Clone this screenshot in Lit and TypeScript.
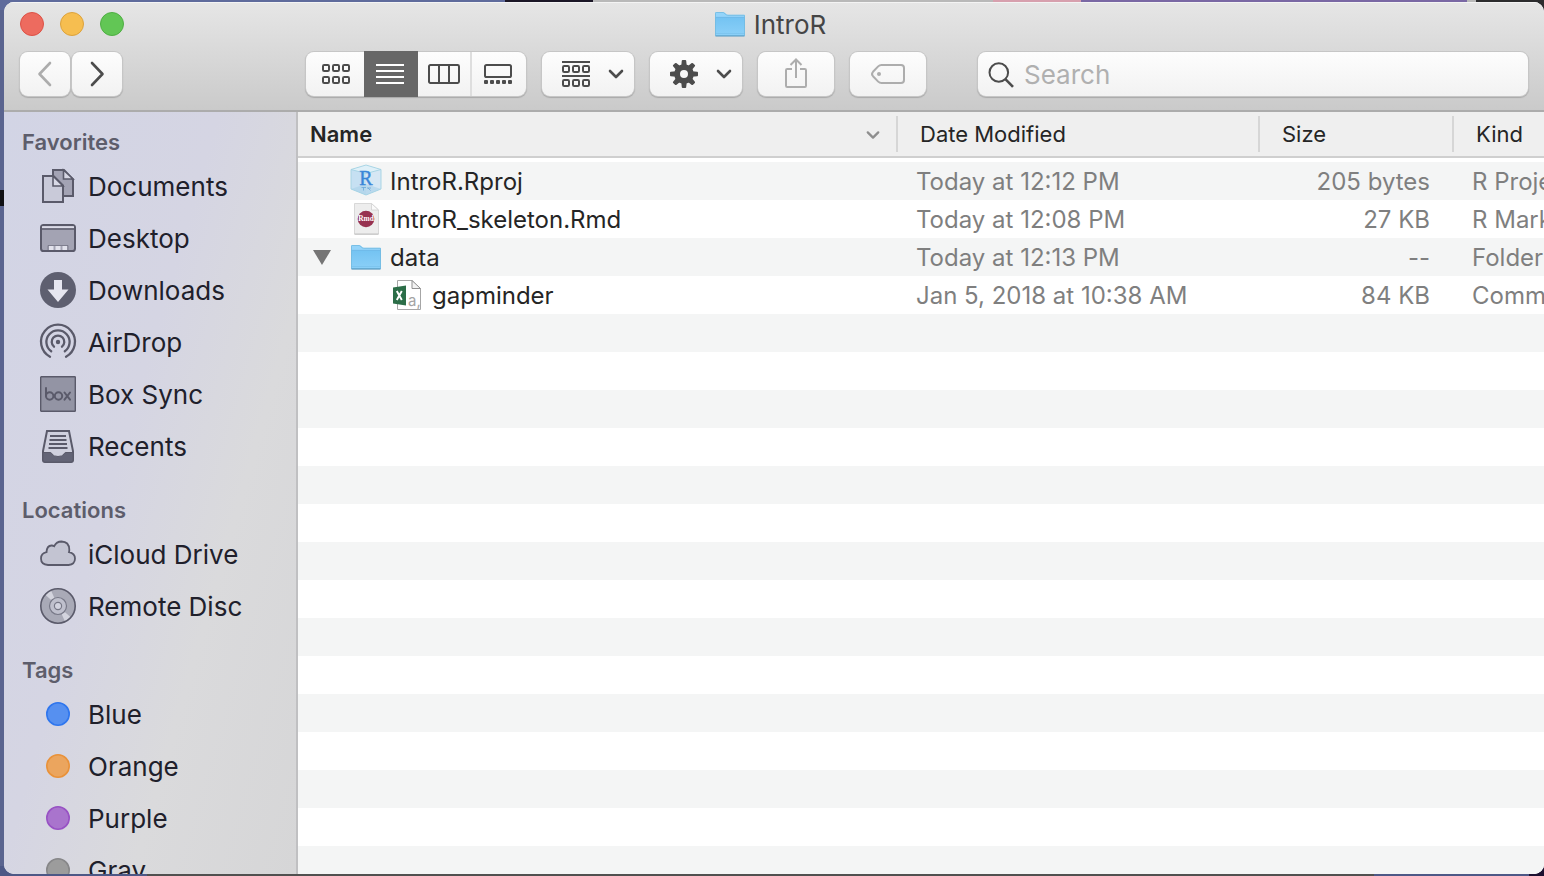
import { LitElement, html, css, svg } from "lit";
import { customElement, property, state } from "lit/decorators.js";
import { classMap } from "lit/directives/class-map.js";

const FONT = css`
  :host {
    box-sizing: border-box;
    font-family: Inter, "Liberation Sans", sans-serif;
    -webkit-font-smoothing: antialiased;
  }
  *, *::before, *::after { box-sizing: border-box; }
  button { font: inherit; color: inherit; cursor: default; }
  svg { display: block; flex: none; overflow: visible; }
`;

/* ---------- shared drawings ---------- */

const folderIcon = html`
  <svg width="32" height="28" viewBox="0 1 32 28" aria-hidden="true">
    <defs>
      <linearGradient id="folder-front" x1="0" y1="0" x2="0" y2="1">
        <stop offset="0" stop-color="#74c3f2"></stop>
        <stop offset="1" stop-color="#8bd0f8"></stop>
      </linearGradient>
    </defs>
    <path d="M1 26V3.2Q1 2 2.2 2H9.3Q10.2 2 10.9 2.7L12.6 4.2Q13.2 4.8 14.2 4.8H30Q31 4.8 31 5.8V26Z" fill="#94d4fa"></path>
    <path d="M1 7.5H31V25Q31 26 30 26H2Q1 26 1 25Z" fill="url(#folder-front)"></path>
    <path d="M1.5 7.4H30.5" stroke="#68b5e4" stroke-width="0.8"></path>
    <path d="M1.5 23.5H30.5" stroke="#7ac3ec" stroke-width="0.8"></path>
    <path d="M1.5 25.6V3.2Q1.5 2.5 2.2 2.5H9.3L12.4 4.9L14 5.3H30.5V25.6Z" fill="none" stroke="#72badf" stroke-width="0.8"></path>
    <path d="M1.5 26H30.5" stroke="#5a9cc4" stroke-width="1.2"></path>
  </svg>`;

const chevronDown = html`
  <svg width="16" height="10" viewBox="0 0 16 10" fill="none" stroke="currentColor" stroke-width="2.6"
    stroke-linecap="round" stroke-linejoin="round" aria-hidden="true">
    <path d="M2 2L8 8L14 2"></path>
  </svg>`;

const roundedSquares = (y: number) =>
  [1, 11, 21].map((x) => svg`<rect x=${x} y=${y} width="6" height="6" rx="1.2"></rect>`);

const toolIcons = {
  back: html`<svg width="16" height="26" viewBox="0 0 16 26" fill="none" stroke="#acacac" stroke-width="2.6" stroke-linecap="round" stroke-linejoin="round"><path d="M13 2L2.5 13L13 24"></path></svg>`,
  forward: html`<svg width="16" height="26" viewBox="0 0 16 26" fill="none" stroke="#4c4c4c" stroke-width="2.6" stroke-linecap="round" stroke-linejoin="round"><path d="M3 2L13.5 13L3 24"></path></svg>`,
  grid: html`<svg width="28" height="20" viewBox="0 0 28 20" fill="none" stroke="#4c4c4c" stroke-width="2">${roundedSquares(1)}${roundedSquares(13)}</svg>`,
  list: html`<svg width="28" height="20" viewBox="0 0 28 20" fill="#fff"><path d="M0 0H28V2H0ZM0 6H28V8H0ZM0 12H28V14H0ZM0 18H28V20H0Z"></path></svg>`,
  columns: html`<svg width="32" height="20" viewBox="0 0 32 20" fill="none" stroke="#4c4c4c" stroke-width="2"><rect x="1" y="1" width="30" height="18" rx="1.4"></rect><path d="M11 1V19M21 1V19"></path></svg>`,
  gallery: html`<svg width="28" height="20" viewBox="0 0 28 20" fill="none" stroke="#4c4c4c" stroke-width="2"><rect x="1" y="1" width="26" height="12" rx="1.6"></rect><g fill="#4c4c4c" stroke="none">${[0, 6, 12, 18, 24].map((x) => svg`<rect x=${x} y="16" width="4" height="4" rx="1"></rect>`)}</g></svg>`,
  arrange: html`<svg width="28" height="26" viewBox="0 0 28 26" fill="none" stroke="#4c4c4c" stroke-width="2"><path d="M0 1H28M0 15H28"></path>${roundedSquares(5)}${roundedSquares(19)}</svg>`,
  gear: html`<svg width="28" height="28" viewBox="-14 -14 28 28" fill="#4c4c4c">
    ${[0, 45, 90, 135, 180, 225, 270, 315].map((a) => svg`<path d="M-2.8 -8L-2.2 -13.2Q-2.1 -14 -1.3 -14H1.3Q2.1 -14 2.2 -13.2L2.8 -8Z" transform="rotate(${a})"></path>`)}
    <path fill-rule="evenodd" d="M0 -9.8A9.8 9.8 0 1 1 0 9.8A9.8 9.8 0 1 1 0 -9.8ZM0 -4A4 4 0 1 0 0 4A4 4 0 1 0 0 -4Z"></path></svg>`,
  share: html`<svg width="22" height="30" viewBox="0 1 22 30" fill="none" stroke="#adadad" stroke-width="2"><path d="M7 11H2.2Q1 11 1 12.2V27.8Q1 29 2.2 29H19.8Q21 29 21 27.8V12.2Q21 11 19.8 11H15M11 20V1.6M5.5 7L11 1.5L16.5 7"></path></svg>`,
  tag: html`<svg width="34" height="20" viewBox="0 0 34 20" fill="none" stroke="#adadad" stroke-width="2"><path d="M10.5 1H30Q33 1 33 4V16Q33 19 30 19H10.5Q8.6 19 7.2 17.6L2 12.2Q0 10 2 7.8L7.2 2.4Q8.6 1 10.5 1Z"></path><circle cx="8" cy="10" r="2" fill="#adadad" stroke="none"></circle></svg>`,
  search: html`<svg width="26" height="26" viewBox="0 -1 26 26" fill="none" stroke="#4c4c4c"><circle cx="10.8" cy="10.5" r="9.3" stroke-width="2"></circle><path d="M17.4 17.2L25 24.8" stroke-width="2.6"></path></svg>`,
};

/* ---------- sidebar drawings, 36 x 36 ---------- */

const frame = (body: unknown) =>
  html`<svg width="36" height="36" viewBox="0 0 36 36" fill="none" stroke="#5a5a6a" stroke-width="2" aria-hidden="true">${body}</svg>`;

const placeIcons: Record<string, unknown> = {
  documents: frame(svg`
    <path d="M13 2H24L33 11.5V28H13Z" fill="#a3a3b4"></path>
    <path d="M23.5 2V11H33Z" fill="#d5d5e2" stroke-width="1.6"></path>
    <path d="M3 8H13.5L23 17.5V34H3Z" fill="#c9cad9"></path>
    <path d="M13 8V18H23Z" fill="#d8d9e6" stroke-width="1.6"></path>`),
  desktop: frame(svg`
    <rect x="1" y="5" width="34" height="26" rx="2.6" fill="#a3a3b3"></rect>
    <path d="M2 6.2H34V8.2H2Z" fill="#dcdce8" stroke="none"></path>
    <path d="M1 9H35" stroke-width="1.6"></path>
    <path d="M9 26H13.5V30H9ZM15.5 26H20.5V30H15.5ZM22.5 26H27V30H22.5Z" fill="#e2e2ec" stroke="none"></path>
    <path d="M8 30V25.5H28V30" stroke-width="1" opacity="0.5"></path>`),
  downloads: frame(svg`
    <circle cx="18" cy="18" r="18" fill="#5e5f70" stroke="none"></circle>
    <path d="M14 8H22V17.5H28.5L18 30L7.5 17.5H14Z" fill="#e6e6f0" stroke="none"></path>`),
  airdrop: frame(svg`
    <g stroke-width="2.3" stroke-linecap="round">
      <path d="M10 32.7A17 17 0 1 1 26 32.7"></path>
      <path d="M11.2 27.3A11.6 11.6 0 1 1 24.8 27.3"></path>
      <path d="M14 22.7A6.3 6.3 0 1 1 22 22.7"></path>
    </g>
    <circle cx="18" cy="18" r="2.2" fill="#5a5a6a" stroke="none"></circle>`),
  box: frame(svg`
    <rect x="0.7" y="0.7" width="34.6" height="34.6" rx="0.6" fill="#9394a4" stroke-width="1.4"></rect>
    <g stroke-width="2" stroke-linecap="round">
      <path d="M6 12V20"></path><circle cx="9.7" cy="20" r="3.7"></circle><circle cx="18.5" cy="20" r="3.7"></circle>
      <path d="M24.5 16.5L30 23.7M30 16.5L24.5 23.7"></path>
    </g>`),
  recents: frame(svg`
    <path d="M7 3H29L33 23V32Q33 34 31 34H5Q3 34 3 32V23Z" fill="#cfd0de"></path>
    <path d="M3 24.5H10Q11.5 24.5 12 26Q13.5 28.5 18 28.5Q22.5 28.5 24 26Q24.5 24.5 26 24.5H33V32Q33 34 31 34H5Q3 34 3 32Z" fill="#636476" stroke-width="1"></path>
    <path d="M10 8H26M9.5 12H26.5M9 16H27M8.5 20H27.5" stroke-width="1.8"></path>`),
  cloud: frame(svg`
    <path d="M8 29Q1 28.5 1 22.5Q1 17.3 6.5 16.2Q6.8 9.8 11.5 9.5Q13 9.4 14.2 10.2Q16.5 5.5 21.5 5.5Q29 5.7 29.3 13.5Q29.4 15 29 16.2Q35 17.5 35 22.6Q35 28.5 28.5 29Z" fill="#c3c4d2" stroke-width="1.8"></path>`),
  disc: frame(svg`
    <circle cx="18" cy="18" r="17.2" fill="#a9aab7" stroke="none"></circle>
    <path d="M18 18L5 6.5A17 17 0 0 1 11 2.5ZM18 18L31 29.5A17 17 0 0 1 25 33.5Z" fill="#d3d4de" stroke="none"></path>
    <circle cx="18" cy="18" r="17.2" stroke-width="1.6"></circle>
    <circle cx="18" cy="18" r="8.5" fill="#bfc0cd" stroke-width="1.2" stroke="#777887"></circle>
    <circle cx="18" cy="18" r="3.6" fill="#d2d3df" stroke-width="1.2" stroke="#777887"></circle>`),
};

const dot = (fill: string, edge: string) =>
  frame(svg`<circle cx="18" cy="18" r="11.2" fill=${fill} stroke=${edge} stroke-width="1.6"></circle>`);

interface Place { label: string; icon: unknown; }
interface Section { title: string; places: Place[]; }

const SECTIONS: Section[] = [
  {
    title: "Favorites",
    places: [
      { label: "Documents", icon: placeIcons.documents },
      { label: "Desktop", icon: placeIcons.desktop },
      { label: "Downloads", icon: placeIcons.downloads },
      { label: "AirDrop", icon: placeIcons.airdrop },
      { label: "Box Sync", icon: placeIcons.box },
      { label: "Recents", icon: placeIcons.recents },
    ],
  },
  {
    title: "Locations",
    places: [
      { label: "iCloud Drive", icon: placeIcons.cloud },
      { label: "Remote Disc", icon: placeIcons.disc },
    ],
  },
  {
    title: "Tags",
    places: [
      { label: "Blue", icon: dot("#5690f0", "#2f76ee") },
      { label: "Orange", icon: dot("#eba55e", "#e9923a") },
      { label: "Purple", icon: dot("#a974cd", "#9852c4") },
      { label: "Gray", icon: dot("#9c9c9c", "#878789") },
    ],
  },
];

@customElement("finder-sidebar")
export class FinderSidebar extends LitElement {
  static styles = [
    FONT,
    css`
      :host {
        display: block;
        overflow: hidden;
        padding-top: 11px;
        border-right: 2px solid #c0c0c2;
        background: linear-gradient(106deg, #d2d4e5 0%, #d5d5e3 42%, #dadadc 68%, #d6d6d7 100%);
      }
      .section { margin-bottom: 18px; }
      .title {
        margin: 0;
        padding-left: 18px;
        font-size: 22px;
        line-height: 38px;
        font-weight: 600;
        color: #5d5d6b;
      }
      .places { margin: 0; padding: 0; list-style: none; }
      .place {
        display: flex;
        align-items: center;
        gap: 12px;
        height: 52px;
        padding: 0 0 2px 36px;
        font-size: 26px;
        color: #20202b;
        text-decoration: none;
        white-space: nowrap;
      }
    `,
  ];

  render() {
    return html`<nav aria-label="Sidebar">
      ${SECTIONS.map(
        (s) => html`<section class="section">
          <h2 class="title">${s.title}</h2>
          <ul class="places">
            ${s.places.map((p) => html`<li><a class="place" href="#">${p.icon}<span>${p.label}</span></a></li>`)}
          </ul>
        </section>`
      )}
    </nav>`;
  }
}

@customElement("finder-toolbar")
export class FinderToolbar extends LitElement {
  @property() heading = "";
  @state() private view = "List";

  static styles = [
    FONT,
    css`
      :host {
        display: block;
        padding-bottom: 14px;
        border-bottom: 2px solid #acacac;
        background: linear-gradient(#e6e6e6, #cacaca);
        box-shadow: inset 0 1px #f4f4f4;
      }
      .titlebar {
        display: grid;
        grid-template-columns: 1fr auto 1fr;
        align-items: center;
        height: 44px;
        margin-bottom: 6px;
        padding: 0 24px 0 16px;
      }
      .lights { display: flex; gap: 16px; }
      .light { width: 24px; height: 24px; padding: 0; border: 1px solid; border-radius: 50%; }
      .close { background: #ed6b5f; border-color: #dc5146; }
      .minimize { background: #f6be50; border-color: #dca23c; }
      .zoom { background: #62c655; border-color: #4fae43; }
      .title {
        display: flex;
        align-items: center;
        gap: 8px;
        margin: 0;
        padding-top: 2px;
        font-size: 26px;
        line-height: 32px;
        font-weight: 400;
        color: #454545;
      }
      .tools { display: flex; gap: 16px; padding: 0 16px; }
      .key, .segments, .field {
        height: 44px;
        border-radius: 8px;
        background: linear-gradient(#fdfdfd, #f2f2f2);
        box-shadow: 0 0 0 1px #c6c6c6, 0 1px 1px 1px #a9a9a9;
      }
      .key {
        display: flex;
        align-items: center;
        justify-content: center;
        padding: 0;
        border: 0;
        color: #4c4c4c;
      }
      .nav { display: flex; gap: 2px; margin-right: 168px; }
      .nav .key { width: 50px; }
      .menu { width: 92px; gap: 18px; padding-left: 10px; }
      .single { width: 76px; }
      .segments { display: grid; grid-template-columns: 58px 54px 52px 56px; }
      .segment {
        display: flex;
        align-items: center;
        justify-content: center;
        padding: 0;
        border: 0;
        background: none;
      }
      .segment:first-child { padding-left: 2px; }
      .segment:last-child { padding-right: 2px; border-left: 2px solid #dedede; }
      .selected { padding-right: 2px; background: #676767; box-shadow: 0 -1px #676767, 0 1px #676767; }
      .field {
        display: flex;
        flex: 1;
        align-items: center;
        gap: 10px;
        min-width: 0;
        margin-left: 36px;
        padding: 0 10px;
      }
      .input {
        flex: 1;
        min-width: 0;
        padding: 0;
        border: 0;
        outline: 0;
        background: none;
        font: inherit;
        font-size: 26px;
        color: #333;
      }
      .input::placeholder { color: #b0b0b0; opacity: 1; }
    `,
  ];

  private segment(name: string, icon: unknown) {
    const on = this.view === name;
    return html`<button
      class=${classMap({ segment: true, selected: on })}
      aria-label="${name} view"
      aria-pressed=${on ? "true" : "false"}
      @click=${() => (this.view = name)}
    >${icon}</button>`;
  }

  render() {
    return html`
      <div class="titlebar">
        <div class="lights">
          <button class="light close" aria-label="Close"></button>
          <button class="light minimize" aria-label="Minimize"></button>
          <button class="light zoom" aria-label="Zoom"></button>
        </div>
        <h1 class="title">${folderIcon}<span>${this.heading}</span></h1>
      </div>
      <div class="tools">
        <div class="nav">
          <button class="key" aria-label="Back" disabled>${toolIcons.back}</button>
          <button class="key" aria-label="Forward">${toolIcons.forward}</button>
        </div>
        <div class="segments" role="group" aria-label="View">
          ${this.segment("Icon", toolIcons.grid)}
          ${this.segment("List", toolIcons.list)}
          ${this.segment("Column", toolIcons.columns)}
          ${this.segment("Gallery", toolIcons.gallery)}
        </div>
        <button class="key menu" aria-label="Arrange">${toolIcons.arrange}${chevronDown}</button>
        <button class="key menu" aria-label="Action">${toolIcons.gear}${chevronDown}</button>
        <button class="key single" aria-label="Share" disabled>${toolIcons.share}</button>
        <button class="key single" aria-label="Edit tags" disabled>${toolIcons.tag}</button>
        <label class="field">${toolIcons.search}<input class="input" type="text" placeholder="Search" aria-label="Search" /></label>
      </div>`;
  }
}

/* ---------- file icons, 32 x 32 ---------- */

const fileIcons: Record<string, unknown> = {
  rproj: html`<svg width="32" height="32" viewBox="0 2 32 32" aria-hidden="true">
    <path d="M16 1L31 5.5V25L16 31L1 25V5.5Z" fill="#cfe4f3"></path>
    <path d="M1 5.5L16 9.5V31L1 25Z" fill="#c6e0f2"></path>
    <path d="M16 9.5L31 5.5V25L16 31Z" fill="#d6e7f4"></path>
    <path d="M16 1L31 5.5L16 9.5L1 5.5Z" fill="#dff0f8"></path>
    <path d="M16 20L31 25L16 31L1 25Z" fill="#aed3ea" opacity="0.7"></path>
    <path d="M16 1L31 5.5V25L16 31L1 25V5.5ZM1 5.5L16 9.5L31 5.5" fill="none" stroke="#a3d3e3" stroke-width="0.9"></path>
    <text x="16" y="20.5" text-anchor="middle" font-family="Liberation Serif, serif" font-size="20" fill="#3a86d8" stroke="#3a86d8" stroke-width="0.4">R</text>
    <path d="M11.5 23.5H16M17 24H21M13.5 23.5V26.5M18 24L20.5 26.5" stroke="#6aa7da" stroke-width="1" fill="none" opacity="0.8"></path>
  </svg>`,
  rmd: html`<svg width="32" height="32" viewBox="0 2 32 32" aria-hidden="true">
    <path d="M4.500 1.500H21.500L28.500 8V32H4.500Z" fill="#ededed" stroke="#d0d0d0" stroke-width="0.8"></path>
    <path d="M21.500 1.500V8H28.500Z" fill="#fafafa" stroke="#d0d0d0" stroke-width="0.8"></path>
    <path d="M4.500 32.200H28.500" stroke="#b8b8b8" stroke-width="0.8"></path>
    <circle cx="16" cy="17" r="8.3" fill="#973250"></circle>
    <text x="16" y="19.200" text-anchor="middle" font-family="Liberation Serif, serif" font-weight="700" font-size="7.4" fill="#fff">Rmd</text>
  </svg>`,
  folder: folderIcon,
  csv: html`<svg width="32" height="32" viewBox="0 1 32 32" aria-hidden="true">
    <path d="M5.5 1.5H20L28.5 10V30.5H5.5Z" fill="#fff" stroke="#a6a6a6" stroke-width="1"></path>
    <path d="M20 1.5V9.5H28.5Z" fill="#f2f2f2" stroke="#8f8f8f" stroke-width="1"></path>
    <path d="M1 8.5L14 6.5V26.5L1 24.5Z" fill="#2c6e48"></path>
    <path d="M4.8 12L9.8 21M9.8 12L4.8 21" stroke="#fff" stroke-width="1.9"></path>
    <text x="16" y="27" font-family="Inter, sans-serif" font-size="15" fill="#a4a4a4">a,</text>
  </svg>`,
};

interface FileRow {
  name: string;
  icon: string;
  date: string;
  size: string;
  kind: string;
  nested?: boolean;
  open?: boolean;
}

const FILES: FileRow[] = [
  { name: "IntroR.Rproj", icon: "rproj", date: "Today at 12:12 PM", size: "205 bytes", kind: "R Project" },
  { name: "IntroR_skeleton.Rmd", icon: "rmd", date: "Today at 12:08 PM", size: "27 KB", kind: "R Markdown" },
  { name: "data", icon: "folder", date: "Today at 12:13 PM", size: "--", kind: "Folder", open: true },
  { name: "gapminder", icon: "csv", date: "Jan 5, 2018 at 10:38 AM", size: "84 KB", kind: "Comma", nested: true },
];

@customElement("finder-list")
export class FinderList extends LitElement {
  @state() private expanded = true;

  static styles = [
    FONT,
    css`
      :host {
        display: block;
        min-width: 0;
        overflow: hidden;
        background: repeating-linear-gradient(#f4f5f5 0 38px, #ffffff 38px 76px) 0 50px no-repeat #ffffff;
      }
      .files { width: 100%; table-layout: fixed; border-collapse: separate; border-spacing: 0; }
      .col-date { width: 362px; }
      .col-size { width: 194px; }
      .col-kind { width: 92px; }
      .head {
        height: 46px;
        padding: 0;
        border-bottom: 2px solid #cfcfcf;
        background: #efefef;
        text-align: left;
      }
      .sort {
        display: flex;
        align-items: center;
        justify-content: space-between;
        width: 100%;
        height: 36px;
        padding: 0 0 0 22px;
        border: 0;
        border-left: 2px solid #d6d6d6;
        background: none;
        font-size: 22px;
        font-weight: 400;
        color: #252525;
        white-space: nowrap;
      }
      .primary { padding: 0 16px 0 12px; border-left: 0; font-weight: 600; }
      .primary svg { width: 14px; margin-top: 2px; color: #8e8e8e; }
      .rows::before { content: ""; display: block; height: 4px; }
      .cell {
        height: 38px;
        padding: 2px 0 0 20px;
        overflow: hidden;
        font-size: 24px;
        line-height: 36px;
        color: #7f7f7f;
        white-space: nowrap;
      }
      .size { padding: 2px 22px 0 0; text-align: right; }
      .name { padding: 2px 0 0 12px; color: #252525; }
      .entry { display: flex; align-items: center; height: 36px; gap: 8px; }
      .twist {
        display: flex;
        width: 32px;
        height: 36px;
        align-items: center;
        padding: 0 0 0 3px;
        border: 0;
        background: none;
      }
      .nested { padding-left: 42px; }
    `,
  ];

  render() {
    const rows = FILES.filter((f) => this.expanded || !f.nested);
    return html`<table class="files">
      <colgroup><col /><col class="col-date" /><col class="col-size" /><col class="col-kind" /></colgroup>
      <thead>
        <tr>
          <th class="head" scope="col"><button class="sort primary">Name${chevronDown}</button></th>
          <th class="head" scope="col"><button class="sort">Date Modified</button></th>
          <th class="head" scope="col"><button class="sort">Size</button></th>
          <th class="head" scope="col"><button class="sort">Kind</button></th>
        </tr>
      </thead>
      <tbody class="rows">
        ${rows.map(
          (f) => html`<tr>
            <td class="cell name">
              <div class=${classMap({ entry: true, nested: !!f.nested })}>
                ${f.open
                  ? html`<button class="twist" aria-label="Toggle folder" aria-expanded=${this.expanded ? "true" : "false"}
                      @click=${() => (this.expanded = !this.expanded)}>
                      <svg width="18" height="16" viewBox="0 1 18 16" fill="#757575"><path d="M0 1H18L9 16Z"></path></svg>
                    </button>`
                  : html`<span class="twist"></span>`}
                ${fileIcons[f.icon]}<span>${f.name}</span>
              </div>
            </td>
            <td class="cell">${f.date}</td>
            <td class="cell size">${f.size}</td>
            <td class="cell">${f.kind}</td>
          </tr>`
        )}
      </tbody>
    </table>`;
  }
}

@customElement("app-root")
export class AppRoot extends LitElement {
  static styles = [
    FONT,
    css`
      :host {
        display: block;
        height: 100vh;
        overflow: hidden;
        padding: 2px 0 2px 4px;
        background:
          linear-gradient(90deg, #5f6b9c 0 32.7%, #1b1626 32.7% 38.4%, #b9b9b9 38.4% 64.3%, #d7a0ae 64.3% 70%, #7a68a4 70% 95%, #b9b9b9 95% 95.6%, #2c2c2e 95.6%) top / 100% 10px no-repeat,
          linear-gradient(90deg, #4d5886 0 9.5%, #50504f 9.5% 89%, #4d5886 89% 99%, #1c1030 99%) bottom / 100% 10px no-repeat,
          linear-gradient(#5a648f 0 190px, #101014 190px 206px, #5a648f 206px);
      }
      .window {
        display: grid;
        grid-template-rows: auto minmax(0, 1fr);
        height: 100%;
        overflow: hidden;
        border-radius: 10px;
        background: #fff;
      }
      .body { display: grid; grid-template-columns: 294px minmax(0, 1fr); min-height: 0; }
    `,
  ];

  render() {
    return html`<main class="window">
      <finder-toolbar heading="IntroR"></finder-toolbar>
      <div class="body">
        <finder-sidebar></finder-sidebar>
        <finder-list></finder-list>
      </div>
    </main>`;
  }
}
